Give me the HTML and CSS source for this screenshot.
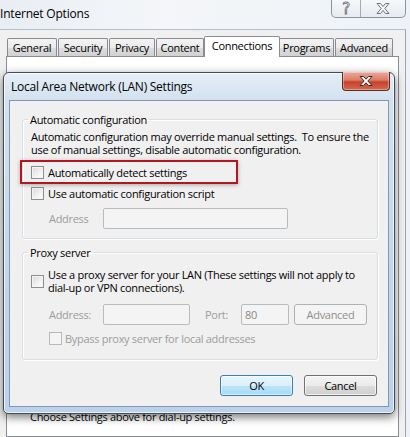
FILE: index.html
```html
<!DOCTYPE html>
<html>
<head>
<meta charset="utf-8">
<link rel="stylesheet" href="styles.css">
</head>
<body>
<div class="window">
  <div class="titlebar">
    <span class="title">Internet Options</span>
    <div class="caps">
      <span class="cap help">?</span>
      <span class="cap close">
        <svg width="14" height="11" viewBox="0 0 14 11"><polygon points="1,0.5 4.5,0.5 7,3.5 9.5,0.5 13,0.5 8.8,5.5 13,10.5 9.5,10.5 7,7.5 4.5,10.5 1,10.5 5.2,5.5" fill="#f7f7f7" stroke="#6d737a" stroke-width="1" stroke-linejoin="round"/></svg>
      </span>
    </div>
  </div>
  <div class="client">
    <div class="tabs">
      <div class="tab t-general">General</div>
      <div class="tab t-security">Security</div>
      <div class="tab t-privacy">Privacy</div>
      <div class="tab t-content">Content</div>
      <div class="tab selected t-connections">Connections</div>
      <div class="tab t-programs">Programs</div>
      <div class="tab t-advanced">Advanced</div>
    </div>
    <div class="panel">
      <p class="dialup">Choose Settings above for dial-up settings.</p>
    </div>
  </div>
</div>

<div class="dialog">
  <div class="dlg-title">
    <span>Local Area Network (LAN) Settings</span>
    <span class="dlg-close">
      <svg width="14" height="10" viewBox="0 0 14 10"><polygon points="1,0.5 4.5,0.5 7,3.2 9.5,0.5 13,0.5 8.8,5 13,9.5 9.5,9.5 7,6.8 4.5,9.5 1,9.5 5.2,5" fill="#ffffff" stroke="#3d2a2a" stroke-width="1" stroke-linejoin="round"/></svg>
    </span>
  </div>
  <div class="dlg-client">
    <fieldset class="group">
      <legend>Automatic configuration</legend>
      <p class="desc">Automatic configuration may override manual settings.&nbsp; To ensure the<br>use of manual settings, disable automatic configuration.</p>
      <div class="check-row first"><span class="cb"></span><span>Automatically detect settings</span></div>
      <div class="check-row"><span class="cb"></span><span>Use automatic configuration script</span></div>
      <div class="field-row script-row"><span class="dim lbl">Address</span><span class="input w-script"></span></div>
    </fieldset>
    <fieldset class="group proxy">
      <legend>Proxy server</legend>
      <div class="check-row two"><span class="cb"></span><span>Use a proxy server for your LAN (These settings will not apply to<br>dial-up or VPN connections).</span></div>
      <div class="field-row proxy-row">
        <span class="dim lbl">Address:</span><span class="input w-addr"></span>
        <span class="dim lbl-port">Port:</span><span class="input w-port">80</span>
        <span class="btn disabled w-adv">Advanced</span>
      </div>
      <div class="check-row bypass"><span class="cb dis"></span><span class="dim">Bypass proxy server for local addresses</span></div>
    </fieldset>
    <div class="buttons">
      <span class="btn default">OK</span>
      <span class="btn">Cancel</span>
    </div>
    <div class="highlight"></div>
  </div>
</div>
</body>
</html>
```

FILE: styles.css
```css
* { box-sizing: border-box; }
body {
  margin: 0;
  width: 410px;
  height: 437px;
  overflow: hidden;
  position: relative;
  font-family: "Open Sans", "Noto Sans", sans-serif;
  font-size: 11px;
  letter-spacing: -0.3px;
  color: #000;
  background: #dfe8f2;
}
p { margin: 0; }

.window {
  height: 437px;
  display: flex;
  flex-direction: column;
  background: linear-gradient(90deg, #e9eef4, #f4f6f9 40%, #eef2f6);
}
.titlebar {
  height: 29px;
  display: flex;
  justify-content: space-between;
  align-items: flex-start;
  padding-right: 4px;
}
.title { font-size: 12px; letter-spacing: -0.2px; margin-top: 5px; line-height: 17px; }
.caps {
  display: flex;
  height: 18px;
  border: 1px solid #8a949f;
  border-top: none;
  border-radius: 0 0 5px 5px;
  background: linear-gradient(#f6f8fa, #e6ebf0);
  overflow: hidden;
}
.cap { display: flex; align-items: center; justify-content: center; height: 100%; }
.cap.help {
  width: 29px;
  border-right: 1px solid #a3acb6;
  font-size: 15px;
  color: #f7f7f7;
  -webkit-text-stroke: 0.8px #6d737a;
  font-family: "DejaVu Sans", sans-serif;
}
.cap.close { width: 44px; }

.client {
  flex: 1;
  margin-right: 4px;
  background: #f0f0f0;
  border-top: 1px solid #b3bfcc;
  border-right: 1px solid #9aa5b1;
  padding: 6px 0 0 6px;
  display: flex;
  flex-direction: column;
}
.tabs {
  height: 20px;
  display: flex;
  align-items: flex-end;
  position: relative;
  z-index: 1;
  padding-left: 1px;
}
.tab {
  height: 18px;
  border: 1px solid #898c95;
  border-bottom: none;
  border-radius: 2px 2px 0 0;
  background: linear-gradient(#f3f3f3 0%, #ebebeb 50%, #dedede 50%, #d1d1d1 100%);
  display: flex;
  align-items: center;
  justify-content: center;
  line-height: 1;
  white-space: nowrap;
  margin-right: 1px;
}
.tab.selected {
  height: 21px;
  margin-bottom: -1px;
  margin-left: -1px;
  margin-right: -1px;
  background: #fff;
  align-items: flex-start;
  padding-top: 3px;
  position: relative;
  z-index: 2;
}
.t-general { width: 50px; }
.t-security { width: 50px; }
.t-privacy { width: 46px; }
.t-content { width: 48px; }
.t-connections { width: 76px; }
.t-programs { width: 55px; }
.t-advanced { width: 58px; }

.panel {
  flex: 1;
  margin-right: 6px;
  border: 1px solid #898c95;
  background: #fff;
  padding: 353px 0 0 23px;
}
.dialup { line-height: 13px; }

/* dialog */
.dialog {
  position: absolute;
  left: 3px;
  top: 72px;
  width: 392px;
  height: 342px;
  border: 1px solid #3f4b59;
  border-radius: 6px 6px 5px 5px;
  background: linear-gradient(#e6eef7, #d3e1ef 26px, #c2d6eb 60%, #bcd2ea);
  box-shadow: 0 3px 10px rgba(0, 0, 0, 0.55), inset 0 0 0 1px rgba(255, 255, 255, 0.7);
  padding: 0 5px 6px 5px;
  display: flex;
  flex-direction: column;
  z-index: 5;
}
.dlg-title {
  height: 27px;
  display: flex;
  align-items: center;
  padding-left: 2px;
  font-size: 12px;
  letter-spacing: -0.25px;
}
.dlg-close {
  position: absolute;
  top: -1px;
  right: 4px;
  width: 48px;
  height: 19px;
  border: 1px solid #5b2c26;
  border-top: none;
  border-radius: 0 0 4px 4px;
  background: linear-gradient(#e9a99c 0%, #dc7c69 45%, #c8412b 55%, #d46a4e 100%);
  box-shadow: inset 0 0 0 1px rgba(255, 255, 255, 0.35);
  display: flex;
  align-items: center;
  justify-content: center;
}
.dlg-client {
  flex: 1;
  background: #f0f0f0;
  border: 1px solid #7f97b2;
  padding: 12px 10px 0 12px;
  position: relative;
  display: flex;
  flex-direction: column;
}
.group {
  margin: 0;
  padding: 0 8px 9px 8px;
  border: 1px solid #d5dfe5;
  border-radius: 3px;
  box-shadow: inset 1px 1px 0 #fff, 1px 1px 0 #fff;
  min-width: 0;
}
.group legend {
  padding: 0 2px;
  margin-left: -3px;
  line-height: 13px;
}
.group.proxy { margin-top: 7px; padding-bottom: 12px; }
.desc { margin-top: 4px; line-height: 13px; white-space: nowrap; }

.check-row {
  display: flex;
  align-items: center;
  gap: 4px;
  height: 21px;
  white-space: nowrap;
}
.check-row.first { margin-top: 6px; }
.check-row.two { height: 26px; margin-top: 9px; line-height: 13px; }
.check-row.bypass { height: 17px; margin-top: 5px; padding-left: 18px; gap: 3px; }

.cb {
  flex: none;
  width: 13px;
  height: 13px;
  border: 1px solid #8e8f8f;
  background: linear-gradient(135deg, #dadada, #f6f6f6 70%, #ffffff);
  box-shadow: inset 0 0 0 1px #f4f4f4;
}
.cb.dis { border-color: #b9b9b9; background: #f4f4f4; box-shadow: none; }
.dim { color: #9c9c9c; }

.field-row {
  display: flex;
  align-items: center;
  height: 21px;
  padding-left: 18px;
  white-space: nowrap;
}
.script-row { margin-top: 4px; }
.proxy-row { margin-top: 10px; }
.lbl { width: 54px; }
.lbl-port { width: 36px; margin-left: 15px; }
.input {
  height: 21px;
  border: 1px solid #b8bcc0;
  border-radius: 2px;
  background: #f4f4f4;
  display: flex;
  align-items: center;
  padding-left: 3px;
  color: #8a8a8a;
}
.w-script { width: 185px; }
.w-addr { width: 87px; }
.w-port { width: 48px; }

.btn {
  height: 21px;
  width: 73px;
  border: 1px solid #707070;
  border-radius: 3px;
  background: linear-gradient(#f3f3f3 0%, #ebebeb 50%, #dddddd 50%, #cfcfcf 100%);
  box-shadow: inset 0 0 0 1px rgba(255, 255, 255, 0.7);
  display: flex;
  align-items: center;
  justify-content: center;
}
.btn.disabled {
  margin-left: 5px;
  border-color: #adb2b5;
  background: #f4f4f4;
  box-shadow: none;
  color: #8f8f8f;
}
.btn.default {
  border-color: #3c7fb1;
  background: linear-gradient(#eaf6fd 0%, #d9f0fc 50%, #bee6fd 50%, #a7d9f5 100%);
  box-shadow: inset 0 0 0 1px rgba(255, 255, 255, 0.6);
}
.buttons {
  display: flex;
  justify-content: flex-end;
  gap: 11px;
  margin-top: 15px;
  padding-right: 1px;
}

.highlight {
  position: absolute;
  left: 10px;
  top: 59px;
  width: 218px;
  height: 24px;
  border: 2px solid #b3161d;
  box-shadow: 0 1px 4px rgba(0, 0, 0, 0.3);
}
```
